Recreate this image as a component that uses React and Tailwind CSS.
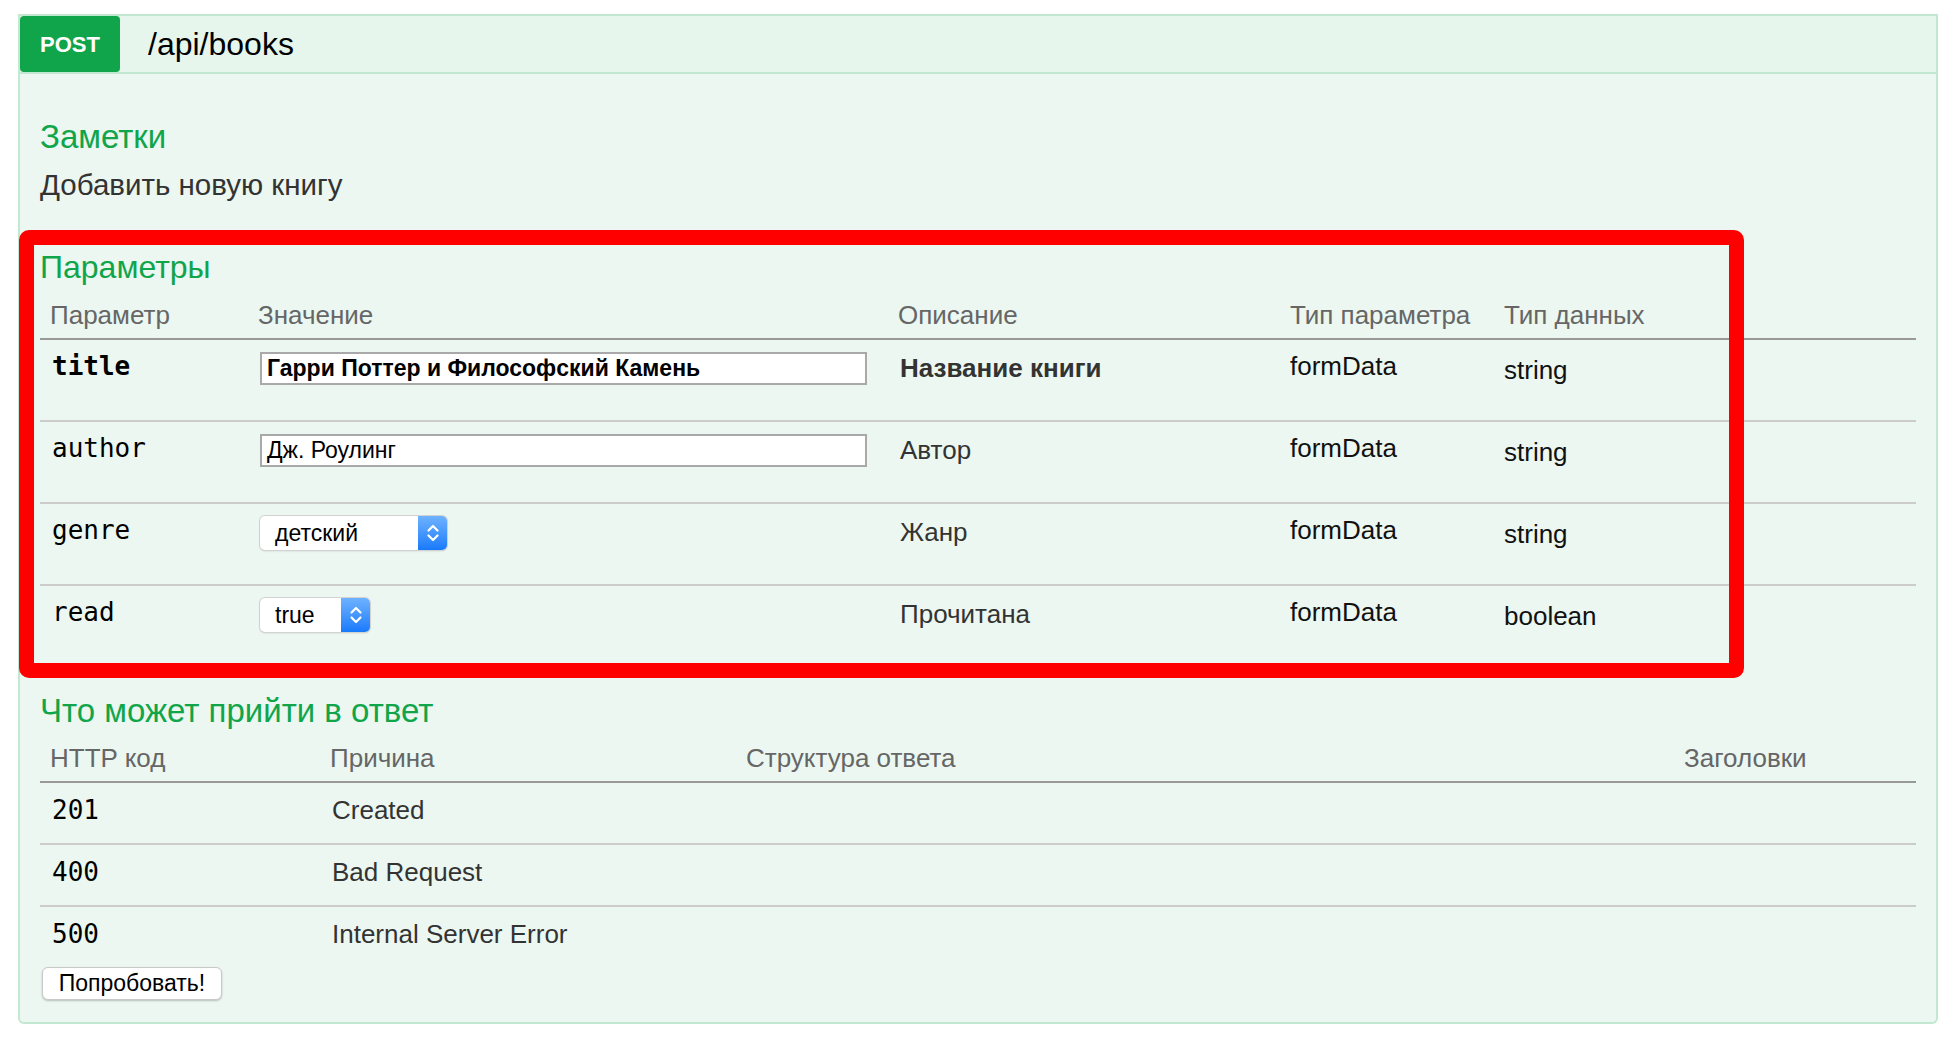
import React from "react";

const params = [
  { name: "title", bold: true, kind: "input", value: "Гарри Поттер и Философский Камень", desc: "Название книги", type: "string" },
  { name: "author", kind: "input", value: "Дж. Роулинг", desc: "Автор", type: "string" },
  { name: "genre", kind: "select", value: "детский", width: "w-[187px]", desc: "Жанр", type: "string" },
  { name: "read", kind: "select", value: "true", width: "w-[110px]", desc: "Прочитана", type: "boolean" },
];

const responses = [
  { code: "201", reason: "Created" },
  { code: "400", reason: "Bad Request" },
  { code: "500", reason: "Internal Server Error" },
];

function Chevrons() {
  return (
    <svg width="16" height="24" viewBox="0 0 16 24" fill="none" stroke="white" strokeWidth="2.2" strokeLinecap="round" strokeLinejoin="round">
      <path d="M3.5 9.5 L8 5 L12.5 9.5" />
      <path d="M3.5 14.5 L8 19 L12.5 14.5" />
    </svg>
  );
}

function FakeSelect({ value, width }) {
  return (
    <div className={"mt-[12px] flex h-[34px] rounded-[5px] bg-white overflow-hidden shadow-[0_0_0_1px_#d2d2d2,0_1px_2px_rgba(0,0,0,0.18)] " + width}>
      <span className="flex-1 pl-[15px] text-[23px] leading-[34px] text-black">{value}</span>
      <span className="w-[29px] flex items-center justify-center bg-linear-to-b from-[#6db2ff] to-[#157afb]">
        <Chevrons />
      </span>
    </div>
  );
}

export default function App() {
  return (
    <div className="relative w-[1958px] h-[1046px] bg-white pt-[14px] pl-[18px] font-['Liberation_Sans',Arial,sans-serif]">
      <div className="w-[1920px]">
        {/* heading */}
        <div className="flex items-center h-[60px] border-2 border-[#c3e8d1] bg-[#e7f6ec]">
          <div className="w-[100px] h-[56px] rounded-[4px] bg-[#10a54a] text-white font-bold text-[22px] flex items-center justify-center">
            POST
          </div>
          <span className="ml-[28px] text-[32px] leading-none text-black">/api/books</span>
        </div>

        {/* content */}
        <div className="border-2 border-t-0 border-[#c3e8d1] bg-[#ebf7f0] rounded-b-[6px] px-[20px] pt-[44px] pb-[22px]">
          <h4 className="text-[33px] leading-[38px] text-[#10a54a]">Заметки</h4>
          <p className="mt-[12px] text-[29.5px] leading-[34px] text-[#333]">Добавить новую книгу</p>

          <h4 className="mt-[46px] text-[32px] leading-[38px] text-[#10a54a]">Параметры</h4>
          <div className="grid grid-cols-[208px_640px_392px_214px_1fr] h-[54px] pt-[12px] border-b-2 border-[#999] text-[26px] leading-[34px] text-[#666]">
            <div className="pl-[10px]">Параметр</div>
            <div className="pl-[10px]">Значение</div>
            <div className="pl-[10px]">Описание</div>
            <div className="pl-[10px] whitespace-nowrap">Тип параметра</div>
            <div className="pl-[10px]">Тип данных</div>
          </div>
          {params.map((p, i) => (
            <div
              key={p.name}
              className={
                "grid grid-cols-[208px_640px_392px_214px_1fr] h-[82px] text-[26px] leading-[34px] " +
                (i < params.length - 1 ? "border-b-2 border-[#ccc]" : "")
              }
            >
              <div className={"pl-[12px] pt-[9px] font-['DejaVu_Sans_Mono',monospace] text-black " + (p.bold ? "font-bold" : "")}>
                {p.name}
              </div>
              <div className="pl-[12px]">
                {p.kind === "input" ? (
                  <div
                    className={
                      "mt-[12px] w-[607px] h-[33px] border-2 border-[#a9a9a9] bg-white pl-[5px] text-[23px] leading-[29px] text-black " +
                      (p.bold ? "font-bold" : "")
                    }
                  >
                    {p.value}
                  </div>
                ) : (
                  <FakeSelect value={p.value} width={p.width} />
                )}
              </div>
              <div className={"pl-[12px] pt-[11px] text-[#333] " + (p.bold ? "font-bold" : "")}>{p.desc}</div>
              <div className="pl-[10px] pt-[9px] text-[#111]">formData</div>
              <div className="pl-[10px] pt-[13px] text-[#111]">{p.type}</div>
            </div>
          ))}

          <h4 className="mt-[24px] text-[33px] leading-[38px] text-[#10a54a]">Что может прийти в ответ</h4>
          <div className="grid grid-cols-[280px_416px_938px_1fr] h-[53px] pt-[11px] border-b-2 border-[#999] text-[26px] leading-[34px] text-[#666]">
            <div className="pl-[10px]">HTTP код</div>
            <div className="pl-[10px]">Причина</div>
            <div className="pl-[10px]">Структура ответа</div>
            <div className="pl-[10px]">Заголовки</div>
          </div>
          {responses.map((r, i) => (
            <div
              key={r.code}
              className={
                "grid grid-cols-[280px_416px_938px_1fr] text-[26px] leading-[34px] pt-[10px] " +
                (i < responses.length - 1 ? "h-[62px] border-b-2 border-[#ccc]" : "h-[53px]")
              }
            >
              <div className="pl-[12px] font-['DejaVu_Sans_Mono',monospace] text-black">{r.code}</div>
              <div className="pl-[12px] text-[#333]">{r.reason}</div>
              <div />
              <div />
            </div>
          ))}
          <button className="mt-[7px] ml-[2px] h-[33px] w-[180px] rounded-[6px] bg-white border border-[#c8c8c8] shadow-[0_1px_2px_rgba(0,0,0,0.22)] text-[23px] leading-[31px] text-black">
            Попробовать!
          </button>
        </div>
      </div>

      {/* red annotation frame */}
      <div className="absolute left-[19px] top-[230px] w-[1725px] h-[448px] border-[15px] border-[#ff0000] rounded-[10px] pointer-events-none" />
    </div>
  );
}
